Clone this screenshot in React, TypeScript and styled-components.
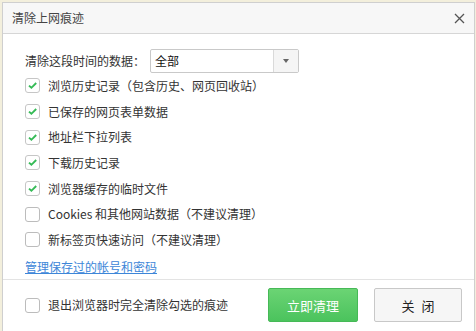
import React from "react";
import styled, { createGlobalStyle } from "styled-components";

const GlobalStyle = createGlobalStyle`
    html, body {
        margin: 0;
        padding: 0;
        background: #f3efdc;
        font-family: "Noto Sans CJK SC", "Noto Sans", sans-serif;
    }
`;

const Dialog = styled.div`
    margin: 2px 1px 0 2px;
    height: 329px;
    box-sizing: border-box;
    background: #ffffff;
    border: 1px solid #cfcfcf;
    border-bottom: none;
    display: flex;
    flex-direction: column;
`;

const Header = styled.div`
    height: 30px;
    background: #f7f7f7;
    border-bottom: 1px solid #d6d6d6;
    display: flex;
    align-items: center;
    justify-content: space-between;
    padding: 0 9px 0 9px;
`;

const Title = styled.span`
    font-size: 12px;
    color: #444;
    line-height: 16px;
`;

const CloseIcon = styled.svg`
    width: 11px;
    height: 11px;
`;

const Body = styled.div`
    padding: 15px 0 0 22px;
    flex: 1;
`;

const RangeRow = styled.div`
    display: flex;
    align-items: center;
    height: 24px;
    font-size: 12px;
    color: #333;
`;

const Label = styled.span`
    width: 125px;
    line-height: 16px;
`;

const Select = styled.div`
    width: 149px;
    height: 24px;
    box-sizing: border-box;
    border: 1px solid #c9c9c9;
    border-radius: 2px;
    display: flex;
    align-items: stretch;
`;

const SelectValue = styled.span`
    flex: 1;
    padding-left: 4px;
    font-size: 12px;
    line-height: 22px;
    color: #111;
`;

const SelectArrow = styled.span`
    width: 24px;
    background: #f5f5f5;
    border-left: 1px solid #dadada;
    display: flex;
    align-items: center;
    justify-content: center;

    &::after {
        content: "";
        border-left: 3.5px solid transparent;
        border-right: 3.5px solid transparent;
        border-top: 4px solid #666;
    }
`;

const Option = styled.label`
    display: flex;
    align-items: center;
    height: 25.7px;
    font-size: 12px;
    color: #333;
    gap: 8px;
    line-height: 16px;
`;

const Box = styled.span<{ $checked: boolean }>`
    width: 15px;
    height: 15px;
    box-sizing: border-box;
    border: 1px solid ${(p) => (p.$checked ? "#c6c6c6" : "#bcbcbc")};
    border-radius: 3px;
    background: #fff;
    display: flex;
    align-items: center;
    justify-content: center;
    flex-shrink: 0;
`;

const Link = styled.a`
    display: inline-block;
    margin-top: 6px;
    font-size: 12px;
    line-height: 16px;
    color: #3d86d8;
    text-decoration: underline;
`;

const Footer = styled.div`
    height: 50px;
    border-top: 1px solid #e3e3e3;
    display: flex;
    align-items: center;
    padding: 0 12px 1px 22px;
`;

const FooterOption = styled(Option)`
    flex: 1;
`;

const Button = styled.button<{ $primary?: boolean }>`
    height: 34px;
    width: ${(p) => (p.$primary ? "90px" : "88px")};
    margin-left: ${(p) => (p.$primary ? "0" : "16px")};
    border-radius: 2px;
    font-family: inherit;
    font-size: 13px;
    color: ${(p) => (p.$primary ? "#fff" : "#222")};
    border: 1px solid ${(p) => (p.$primary ? "#46b957" : "#c8c8c8")};
    background: ${(p) =>
        p.$primary ? "linear-gradient(#6bd474, #4bc35d)" : "#f6f6f6"};
    word-spacing: 4px;
`;

const Check = () => (
    <svg width="11" height="9" viewBox="0 0 11 9">
        <path d="M2 4.6 L4.4 6.8 L9.2 2" fill="none" stroke="#36bb57" strokeWidth="1.9" />
    </svg>
);

const options = [
    { text: "浏览历史记录（包含历史、网页回收站）", checked: true },
    { text: "已保存的网页表单数据", checked: true },
    { text: "地址栏下拉列表", checked: true },
    { text: "下载历史记录", checked: true },
    { text: "浏览器缓存的临时文件", checked: true },
    { text: "Cookies 和其他网站数据（不建议清理）", checked: false },
    { text: "新标签页快速访问（不建议清理）", checked: false },
];

class App extends React.Component {
    render() {
        return (
            <>
                <GlobalStyle />
                <Dialog>
                    <Header>
                        <Title>清除上网痕迹</Title>
                        <CloseIcon viewBox="0 0 11 11">
                            <path d="M1 1 L10 10 M10 1 L1 10" stroke="#555" strokeWidth="1.3" />
                        </CloseIcon>
                    </Header>
                    <Body>
                        <RangeRow>
                            <Label>清除这段时间的数据：</Label>
                            <Select>
                                <SelectValue>全部</SelectValue>
                                <SelectArrow />
                            </Select>
                        </RangeRow>
                        {this.parseOptions()}
                        <Link>管理保存过的帐号和密码</Link>
                    </Body>
                    <Footer>
                        <FooterOption>
                            <Box $checked={false} />
                            退出浏览器时完全清除勾选的痕迹
                        </FooterOption>
                        <Button $primary>立即清理</Button>
                        <Button>关 闭</Button>
                    </Footer>
                </Dialog>
            </>
        );
    }

    parseOptions() {
        let out = [];

        for (let i = 0; i < options.length; i++) {
            out.push(
                <Option key={i}>
                    <Box $checked={options[i].checked}>
                        {options[i].checked && <Check />}
                    </Box>
                    {options[i].text}
                </Option>
            );
        }

        return out;
    }
}

export default App;
